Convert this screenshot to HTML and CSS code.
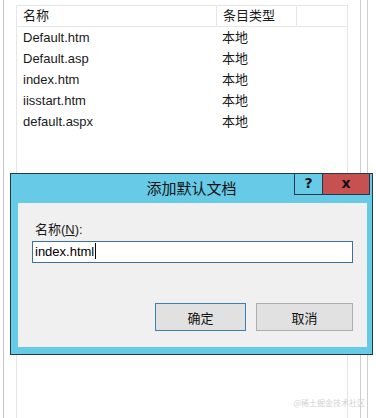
FILE: index.html
```html
<!DOCTYPE html>
<html>
<head>
  <title>添加默认文档</title>
  <link rel="stylesheet" href="styles.css">
</head>
<body>

  <div class="page">
    <!-- default document list behind the dialog -->
    <div class="frame">
      <div class="list">
        <div class="row head">
          <div class="cell c1">名称</div>
          <div class="cell c2">条目类型</div>
          <div class="cell c3"></div>
        </div>
        <div class="row"><div class="cell c1">Default.htm</div><div class="cell c2">本地</div></div>
        <div class="row"><div class="cell c1">Default.asp</div><div class="cell c2">本地</div></div>
        <div class="row"><div class="cell c1">index.htm</div><div class="cell c2">本地</div></div>
        <div class="row"><div class="cell c1">iisstart.htm</div><div class="cell c2">本地</div></div>
        <div class="row"><div class="cell c1">default.aspx</div><div class="cell c2">本地</div></div>
      </div>
      <div class="scroll"></div>
    </div>

    <!-- Add default document dialog -->
    <div class="dialog">
      <div class="titlebar">
        <span class="title">添加默认文档</span>
        <div class="caption-btns">
          <div class="cap help">?</div>
          <div class="cap close">x</div>
        </div>
      </div>
      <div class="content">
        <div class="label">名称(<u>N</u>):</div>
        <div class="input">index.html<span class="caret"></span></div>
        <div class="actions">
          <button class="btn ok">确定</button>
          <button class="btn cancel">取消</button>
        </div>
      </div>
    </div>

    <div class="watermark">@稀土掘金技术社区</div>
  </div>

</body>
</html>
```

FILE: styles.css
```css
body {
  margin: 0;
  background: #fff;
  font-family: "Liberation Sans", "Noto Sans CJK SC", sans-serif;
  font-size: 13px;
  color: #1a1a1a;
}

.page {
  position: relative;
  width: 376px;
  height: 418px;
  overflow: hidden;
}

.frame {
  display: flex;
  height: 418px;
  margin-left: 3px;
  padding-left: 12px;
  border-left: 1px solid #c8c8c8;
}

.list {
  width: 330px;
  margin-top: 5px;
  border-left: 1px solid #e6e6e6;
  border-right: 1px solid #e6e6e6;
}

.row {
  display: flex;
  height: 21px;
  line-height: 21px;
}

.row.head {
  height: 20px;
  line-height: 20px;
  border-top: 1px solid #e6e6e6;
  border-bottom: 1px solid #e6e6e6;
}

.cell {
  padding-left: 6px;
  white-space: nowrap;
}

.c1 {
  width: 193px;
}

.c2 {
  width: 73px;
}

.head .c1,
.head .c2 {
  border-right: 1px solid #e6e6e6;
}

.scroll {
  width: 6px;
  margin-left: 12px;
  border-left: 1px solid #cfcfcf;
  border-right: 1px solid #cfcfcf;
}

.dialog {
  position: absolute;
  left: 10px;
  top: 173px;
  width: 361px;
  height: 180px;
  border: 1px solid #1e3b4c;
  background: #67cbe7;
}

.titlebar {
  position: relative;
  height: 29px;
  text-align: center;
}

.title {
  font-family: "Noto Sans CJK SC", sans-serif;
  font-size: 15px;
  line-height: 28px;
  color: #111;
}

.caption-btns {
  position: absolute;
  top: -1px;
  right: 2px;
  display: flex;
}

.cap {
  height: 20px;
  line-height: 19px;
  border: 1px solid #1e3b4c;
  font-family: "DejaVu Sans", sans-serif;
  font-weight: bold;
  font-size: 14px;
  text-align: center;
  color: #111;
}

.help {
  width: 27px;
  background: #67cbe7;
}

.close {
  width: 46px;
  border-left: none;
  background: #c75050;
}

.content {
  margin: 0 5px 0 7px;
  height: 144px;
  padding: 18px 14px 0 14px;
  box-sizing: border-box;
  background: #f0f0f0;
}

.label {
  margin-left: 3px;
  line-height: 18px;
}

.input {
  margin-top: 2px;
  height: 20px;
  line-height: 20px;
  padding-left: 2px;
  border: 1px solid #3f6f96;
  background: #fff;
  color: #000;
}

.caret {
  display: inline-block;
  width: 1px;
  height: 16px;
  margin-left: 1px;
  vertical-align: -3px;
  background: #000;
}

.actions {
  display: flex;
  justify-content: flex-end;
  gap: 10px;
  margin-top: 40px;
}

.btn {
  height: 28px;
  font-family: "Noto Sans CJK SC", sans-serif;
  font-size: 13px;
  color: #111;
  background: #e1e1e1;
  border: 1px solid #adadad;
}

.ok {
  width: 91px;
  border-color: #3c7fb1;
}

.cancel {
  width: 97px;
}

.watermark {
  position: absolute;
  right: 11px;
  bottom: 10px;
  font-family: "Noto Sans CJK SC", sans-serif;
  font-size: 8px;
  color: #d2d2d2;
}
```
